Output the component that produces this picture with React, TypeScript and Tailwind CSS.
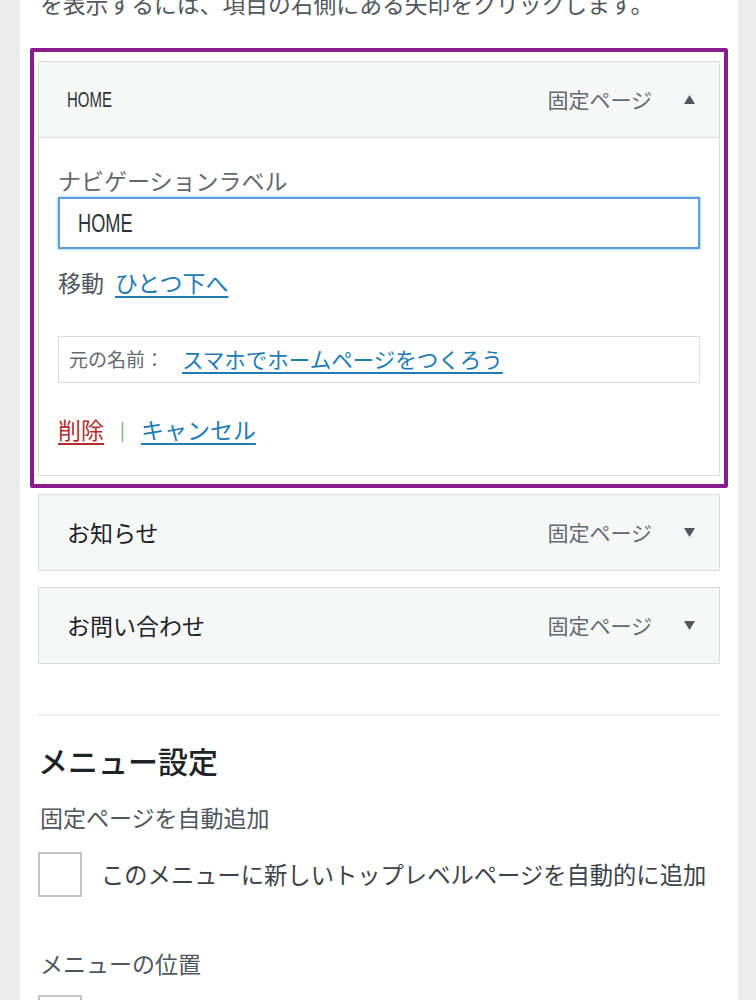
import React from "react";

function Caret({ up }: { up?: boolean }) {
  return (
    <svg width="11" height="9" viewBox="0 0 11 9" className="ml-[32px] mr-[2px]">
      {up ? (
        <path d="M5.5 0 L11 9 L0 9 Z" fill="#50575e" />
      ) : (
        <path d="M0 0 L11 0 L5.5 9 Z" fill="#50575e" />
      )}
    </svg>
  );
}

function ItemHeader({ title, open, condensed }: { title: string; open?: boolean; condensed?: boolean }) {
  return (
    <div className="h-[77px] border border-[#dcdcde] bg-[#f6f7f7] flex items-center justify-between pl-[28px] pr-[22px]">
      {condensed ? (
        <span className="inline-block origin-left scale-x-[0.68] text-[22px] font-['Liberation_Sans',sans-serif] text-[#2c3338]">
          {title}
        </span>
      ) : (
        <span className="text-[23px] text-[#1d2327]">{title}</span>
      )}
      <div className="flex items-center">
        <span className="text-[21px] text-[#646970]">固定ページ</span>
        <Caret up={open} />
      </div>
    </div>
  );
}

export default function App() {
  return (
    <div className="min-h-screen w-[756px] bg-[#ececec] pl-[20px] pr-[18px] font-['Noto_Sans_CJK_JP',sans-serif]">
      <div className="bg-white h-[1000px] overflow-hidden px-[18px]">
        <p className="-mt-[10px] pl-[2px] text-[22.8px] leading-[28px] text-[#50575e] whitespace-nowrap">
          を表示するには、項目の右側にある矢印をクリックします。
        </p>

        <div className="mt-[30px] -mx-[8px] border-[4px] border-[#8b1a8f] rounded-[2px] px-[4px] pt-[9px] pb-[8px]">
          <ItemHeader title="HOME" open condensed />
          <div className="border border-t-0 border-[#dcdcde] bg-white px-[19px] pt-[29px] pb-[31px]">
            <div className="text-[23px] leading-[26px] text-[#646970]">ナビゲーションラベル</div>
            <div className="mt-[4px] h-[52px] border-[2px] border-[#5b9dd9] shadow-[0_0_3px_rgba(30,140,190,0.6)] px-[18px] flex items-center">
              <span className="inline-block origin-left scale-x-[0.7] text-[26px] font-['Liberation_Sans',sans-serif] text-[#2c3338]">
                HOME
              </span>
            </div>
            <div className="mt-[18px] flex items-center text-[23px] leading-[30px]">
              <span className="text-[#50575e]">移動</span>
              <a className="ml-[11px] text-[#1e7cb3] underline underline-offset-4">ひとつ下へ</a>
            </div>
            <div className="mt-[39px] h-[47px] border border-[#dcdcde] px-[10px] flex items-center">
              <span className="text-[19px] text-[#646970]">元の名前：</span>
              <a className="ml-[18px] text-[21.5px] text-[#1e7cb3] underline underline-offset-4">
                スマホでホームページをつくろう
              </a>
            </div>
            <div className="mt-[31px] flex items-center text-[23px] leading-[30px]">
              <a className="text-[#b32d2e] underline underline-offset-4">削除</a>
              <span className="mx-[16px] text-[18px] text-[#8c8f94]">|</span>
              <a className="text-[#1e7cb3] underline underline-offset-4">キャンセル</a>
            </div>
          </div>
        </div>

        <div className="mt-[6px]">
          <ItemHeader title="お知らせ" />
        </div>
        <div className="mt-[16px]">
          <ItemHeader title="お問い合わせ" />
        </div>

        <div className="mt-[50px] h-[2px] bg-[#f0f0f1]" />

        <h2 className="mt-[26px] text-[30px] leading-[36px] font-medium text-[#1d2327]">メニュー設定</h2>
        <div className="mt-[25px] pl-[2px] text-[23px] leading-[28px] text-[#50575e]">固定ページを自動追加</div>
        <div className="mt-[21px] flex items-center">
          <div className="w-[44px] h-[45px] border-[2px] border-[#c3c4c7] bg-white" />
          <span className="ml-[19px] text-[23.3px] text-[#3c434a] whitespace-nowrap">
            このメニューに新しいトップレベルページを自動的に追加
          </span>
        </div>
        <div className="mt-[52px] pl-[2px] text-[23px] leading-[28px] text-[#50575e]">メニューの位置</div>
        <div className="mt-[18px] w-[44px] h-[45px] border-[2px] border-[#c3c4c7] bg-white" />
      </div>
    </div>
  );
}
